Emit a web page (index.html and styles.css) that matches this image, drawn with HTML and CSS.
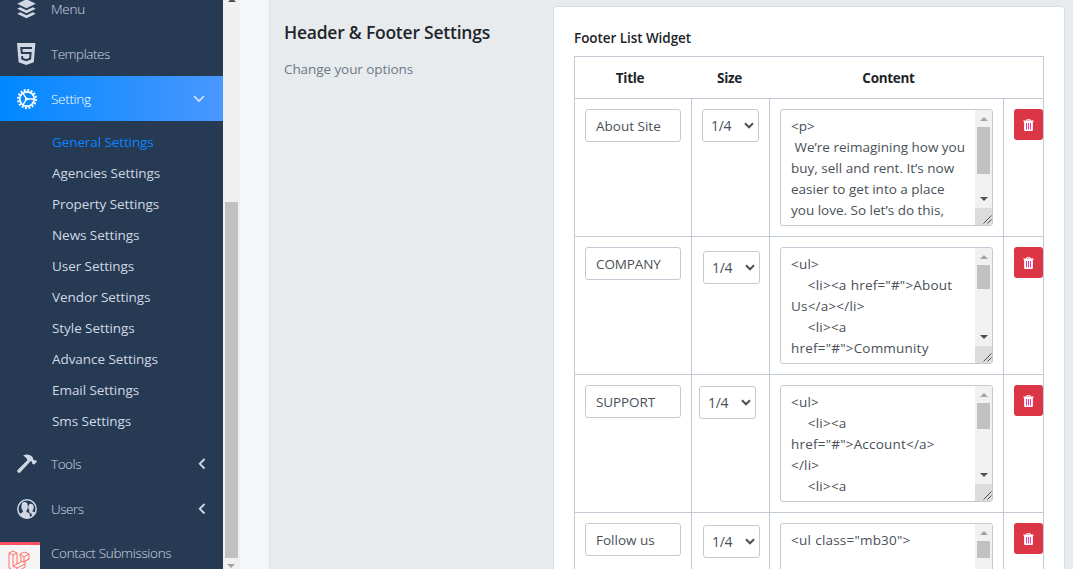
FILE: index.html
```html
<!DOCTYPE html>
<html lang="en">
<head>
<meta charset="utf-8">
<title>General Settings</title>
<link rel="stylesheet" href="styles.css">
</head>
<body>
<svg class="defs" width="0" height="0">
  <symbol id="trash" viewBox="0 0 11 12"><path fill="#fff" fill-rule="evenodd" d="M3.2 1.6 3.7.3Q3.9 0 4.3 0h2.4q.4 0 .6.3l.5 1.3h2.9v1H9.900v8.100Q9.900 12 8.800 12H2.200q-1.100 0-1.100-1.300V2.600H.3v-1zM4.200 1.600h2.600L6.400.8H4.600zM3 4v6.300h1V4zm2 0v6.300h1V4zm2 0v6.300h1V4z"/><path stroke="#f03aa6" stroke-width="1" d="M3.500 4v6.300M5.500 4v6.300M7.500 4v6.300"/></symbol>
  <symbol id="left" viewBox="0 0 8 12"><path d="M6.500 1 1.800 5.800l4.700 4.700" fill="none" stroke="currentColor" stroke-width="1.900"/></symbol>
  <symbol id="caret" viewBox="0 0 10 7"><path d="m1 1.300 4 4 4-4" fill="none" stroke="#495057" stroke-width="2"/></symbol>
  <symbol id="tri-up" viewBox="0 0 8 4"><path d="M0 4 4 0l4 4z" fill="currentColor"/></symbol>
  <symbol id="tri-down" viewBox="0 0 8 4"><path d="M0 0h8L4 4z" fill="currentColor"/></symbol>
  <symbol id="grip" viewBox="0 0 9 9"><path d="M.5 8.500 8.500.5M4.500 8.500l4-4" stroke="#505050" fill="none"/></symbol>
</svg>
<div class="app">
  <nav class="sidebar">
    <a class="item"><svg class="icon" viewBox="0 0 20 20"><g fill="#cfd8e3"><path d="m9.500.2 9.300 4.500-9.300 4.500L.2 4.700z"/><path d="m.2 9.700 3-1.500 6.300 3 6.300-3 3 1.500-9.300 4.500z"/><path d="m.2 14.700 3-1.500 6.300 3 6.300-3 3 1.500-9.300 4.500z"/></g></svg><span>Menu</span></a>
    <a class="item"><svg class="icon tall" viewBox="0 0 20 22"><path fill="#cfd8e3" d="M0 0h18.400l-1.600 19.200L9.200 22l-7.600-2.800z"/><path d="M15 5H4.300l.5 5h8.800l-.5 5.800-3.900 1.400-3.900-1.400-.2-2.600" fill="none" stroke="#273a54" stroke-width="2"/></svg><span>Templates</span></a>
    <a class="item active"><svg class="icon" viewBox="0 0 20 20"><circle cx="10" cy="10" r="9" fill="none" stroke="#fff" stroke-width="2" stroke-dasharray="2 1.534"/><circle cx="10" cy="10" r="7.200" fill="none" stroke="#fff" stroke-width="1.700"/><circle cx="9.500" cy="10" r="1.500" fill="#fff"/><path d="M10 10h7M9.500 10 6 4.200M9.500 10 6 15.800" stroke="#fff" stroke-width="1.400"/></svg><span>Setting</span><svg class="down" viewBox="0 0 12 8"><path d="m1 1 5 5 5-5" fill="none" stroke="#d3e5fc" stroke-width="1.700"/></svg></a>
    <div class="sub">
      <a class="current">General Settings</a><a>Agencies Settings</a><a>Property Settings</a><a>News Settings</a><a>User Settings</a><a>Vendor Settings</a><a>Style Settings</a><a>Advance Settings</a><a>Email Settings</a><a>Sms Settings</a>
    </div>
    <a class="item"><svg class="icon" viewBox="0 0 20 20"><path fill="#cfd8e3" d="M6.200 1.500C9.500-.3 13.500.6 15.700 3.200l.5 2.400 1.300.9 1.200-.5 1.300 1.800-3.200 3-1.800-1.600.1-1.300-1.300-1L3.200 18.500q-1.200.9-2.300-.2T.5 16L10.300 6.200Q9.800 3.600 6.200 1.500z"/></svg><span>Tools</span><svg class="left"><use href="#left"/></svg></a>
    <a class="item"><svg class="icon" viewBox="0 0 20 20"><circle cx="10" cy="10" r="9.200" fill="#273a54" stroke="#cfd8e3" stroke-width="1.500"/><g fill="#cfd8e3"><ellipse cx="7.600" cy="7.500" rx="3.200" ry="4.400"/><path d="M5.900 10h3.600v3l3 1.200.7 4.700q-6.500 2.100-11.200-3.400l3.900-2.500z"/><ellipse cx="14" cy="8.300" rx="2.700" ry="3.500"/><path d="M12.600 10h2.900v2.500l2.600 1-2.600 3.700-1.500-3-2-1z"/></g></svg><span>Users</span><svg class="left"><use href="#left"/></svg></a>
    <a class="item last"><i class="icon"></i><span>Contact Submissions</span></a>
    <div class="debug"><svg viewBox="0 0 22 24"><path d="m1 3 4-2 4 2v11l4-2V7l-1-1V4l4-2 5 2v5l-4 2v6L9 22l-8-4zM1 3l4 2 4-2M5 5v11l4 2 8-4M5 16l4-2M12 4l4 3 5-3M16 7v5l-3-1M16 12l5-3M9 18v4" fill="none" stroke="#ff7068" stroke-width="1"/></svg></div>
  </nav>
  <div class="pagebar"><svg class="p-up"><use href="#tri-up"/></svg><div class="p-thumb"></div><svg class="p-down"><use href="#tri-down"/></svg></div>
  <div class="gutter"></div>
  <main class="content">
    <section class="intro"><h2>Header &amp; Footer Settings</h2><p>Change your options</p></section>
    <section class="card">
      <h3>Footer List Widget</h3>
      <div class="table">
        <div class="row head"><div>Title</div><div>Size</div><div>Content</div><div></div></div>
        <div class="row">
          <div class="cell"><div class="input">About Site</div></div>
          <div class="cell"><div class="select s1">1/4<svg><use href="#caret"/></svg></div></div>
          <div class="cell"><div class="area"><pre>&lt;p&gt;
 We’re reimagining how you
buy, sell and rent. It’s now
easier to get into a place
you love. So let’s do this,</pre><div class="bar"><svg class="up"><use href="#tri-up"/></svg><div class="thumb t1"></div><svg class="dn"><use href="#tri-down"/></svg><div class="corner"><svg><use href="#grip"/></svg></div></div></div></div>
          <div class="cell"><div class="del"><svg><use href="#trash"/></svg></div></div>
        </div>
        <div class="row">
          <div class="cell"><div class="input caps">COMPANY</div></div>
          <div class="cell"><div class="select s2">1/4<svg><use href="#caret"/></svg></div></div>
          <div class="cell"><div class="area"><pre class="markup">&lt;ul&gt;
    &lt;li&gt;&lt;a href="#"&gt;About
Us&lt;/a&gt;&lt;/li&gt;
    &lt;li&gt;&lt;a
href="#"&gt;Community</pre><div class="bar"><svg class="up"><use href="#tri-up"/></svg><div class="thumb t2"></div><svg class="dn"><use href="#tri-down"/></svg><div class="corner"><svg><use href="#grip"/></svg></div></div></div></div>
          <div class="cell"><div class="del"><svg><use href="#trash"/></svg></div></div>
        </div>
        <div class="row">
          <div class="cell"><div class="input caps">SUPPORT</div></div>
          <div class="cell"><div class="select s3">1/4<svg><use href="#caret"/></svg></div></div>
          <div class="cell"><div class="area"><pre class="markup">&lt;ul&gt;
    &lt;li&gt;&lt;a
href="#"&gt;Account&lt;/a&gt;
&lt;/li&gt;
    &lt;li&gt;&lt;a</pre><div class="bar"><svg class="up"><use href="#tri-up"/></svg><div class="thumb t3"></div><svg class="dn"><use href="#tri-down"/></svg><div class="corner"><svg><use href="#grip"/></svg></div></div></div></div>
          <div class="cell"><div class="del"><svg><use href="#trash"/></svg></div></div>
        </div>
        <div class="row">
          <div class="cell"><div class="input">Follow us</div></div>
          <div class="cell"><div class="select s4">1/4<svg><use href="#caret"/></svg></div></div>
          <div class="cell"><div class="area"><pre class="markup">&lt;ul class="mb30"&gt;</pre><div class="bar"><svg class="up"><use href="#tri-up"/></svg><div class="thumb t4"></div></div></div></div>
          <div class="cell"><div class="del"><svg><use href="#trash"/></svg></div></div>
        </div>
      </div>
    </section>
  </main>
</div>
</body>
</html>
```
FILE: styles.css
```css
* { box-sizing: border-box; }
body { margin: 0; overflow: hidden; font: 14px/21px "Open Sans", "Noto Sans", sans-serif; letter-spacing: -0.3px; color: #212529; background: #e8ebee; }
svg { display: block; flex: none; }
.defs { position: absolute; }
.app { display: flex; height: 569px; overflow: hidden; }

.sidebar { position: relative; flex: none; width: 223px; height: 569px; overflow: hidden; background: #273a54; color: #cfd8e3; font-size: 13.5px; }
.item { display: flex; align-items: center; height: 45px; padding: 1px 17px 0; font-weight: 300; letter-spacing: -0.45px; }
.item:first-child { margin-top: -14px; }
.item span { flex: 1; margin-left: 14px; }
.item:first-child span { letter-spacing: -0.3px; }
.item.active { background: linear-gradient(90deg, #0088ff, #4a97ff); color: #fff; letter-spacing: -0.3px; }
.item.last { height: 43px; letter-spacing: -0.33px; }
.icon { width: 20px; height: 20px; }
.icon.tall { height: 22px; }
.down { width: 12px; height: 8px; margin-right: 1px; }
.left { width: 8px; height: 12px; }
.sub { padding: 6px 0 4px 52px; letter-spacing: -0.06px; }
.sub a { display: block; height: 31px; line-height: 31px; }
.sub .current { color: #0a84ff; letter-spacing: -0.1px; }
.debug { position: absolute; left: 0; bottom: 0; width: 40px; height: 27px; overflow: hidden; padding: 5px 8px; background: #f5f5f5; border-top: 3px solid #ff5161; }
.debug svg { width: 22px; height: 24px; }

.pagebar { flex: none; width: 17px; background: #f0f0f0; color: #a3a3a3; overflow: hidden; }
.p-up { width: 8px; height: 4px; margin: -2px 0 0 5px; color: #505050; }
.p-thumb { width: 13px; height: 356px; margin: 200px 0 0 2px; background: #c1c1c1; }
.p-down { width: 8px; height: 4px; margin: 6px 0 0 4px; }
.gutter { flex: none; width: 30px; background: #f5f6f8; border-right: 1px solid #dee2e6; }

.content { flex: 1; display: flex; padding: 6px 8px 0 14px; }
.intro { width: 269px; padding-top: 13px; }
h2 { margin: 0; font-size: 17.5px; line-height: 26px; font-weight: 600; letter-spacing: -0.23px; }
.intro p { margin: 14px 0 0; color: #6c7a86; font-size: 13.5px; line-height: 20px; letter-spacing: -0.08px; }
.card { width: 512px; height: 600px; padding: 21px 20px; background: #fff; border: 1px solid #d9dde1; border-radius: 4px; }
h3 { margin: 0 0 7px; font-size: 13.5px; line-height: 21px; font-weight: 600; letter-spacing: -0.06px; }
.table { width: 470px; border: 1px solid #c2cad4; border-bottom: 0; }
.row { display: grid; grid-template-columns: 117px 78px 234px 39px; height: 138px; border-bottom: 1px solid #c2cad4; }
.row:not(.head) > div:not(:last-child) { border-right: 1px solid #c2cad4; }
.head { height: 42px; line-height: 43px; font-size: 13.5px; font-weight: 700; text-align: center; }
.head > div { padding-right: 7px; }
.head > div:nth-child(2) { padding-right: 3px; }
.head > div:nth-child(3) { padding-right: 0; padding-left: 3px; }
.cell { padding: 10px; min-width: 0; }
.input, .select, .area { border: 1px solid #c2cad4; border-radius: 3px; background: #fff; color: #495057; }
.input { width: 96px; height: 33px; padding: 0 10px; line-height: 32px; font-size: 13.5px; letter-spacing: 0; }
.input.caps { letter-spacing: -0.1px; }
.select { display: flex; align-items: center; justify-content: space-between; width: 57px; height: 33px; padding: 0 4px 0 8px; }
.select svg { width: 10px; height: 7px; }
.s2 { margin: 4px 0 0 1px; }
.s3 { margin: 1px 0 0 -3px; }
.s4 { margin: 2px 0 0 1px; }
.area { display: flex; justify-content: space-between; width: 213px; height: 117px; overflow: hidden; }
pre { margin: 0; padding: 6px 0 0 10px; font: inherit; font-size: 13.5px; letter-spacing: 0; }
pre.markup { letter-spacing: 0.2px; word-spacing: 0.5px; }
.bar { flex: none; display: flex; flex-direction: column; align-items: center; width: 17px; background: #f1f1f1; color: #505050; }
.up { width: 8px; height: 4px; margin-top: 7px; color: #a3a3a3; }
.thumb { width: 13px; margin-top: 6px; background: #c1c1c1; }
.t1 { height: 47px; }
.t2 { height: 24px; }
.t3 { height: 26px; }
.t4 { height: 17px; }
.dn { width: 8px; height: 4px; margin-top: auto; }
.corner { width: 17px; height: 17px; margin-top: 7px; padding: 7px 0 0 8px; background: #dcdcdc; }
.corner svg { width: 9px; height: 9px; }
.del { display: flex; align-items: center; justify-content: center; width: 29px; height: 31px; border-radius: 3px; background: #dc3545; }
.del svg { width: 11px; height: 12px; }
```
